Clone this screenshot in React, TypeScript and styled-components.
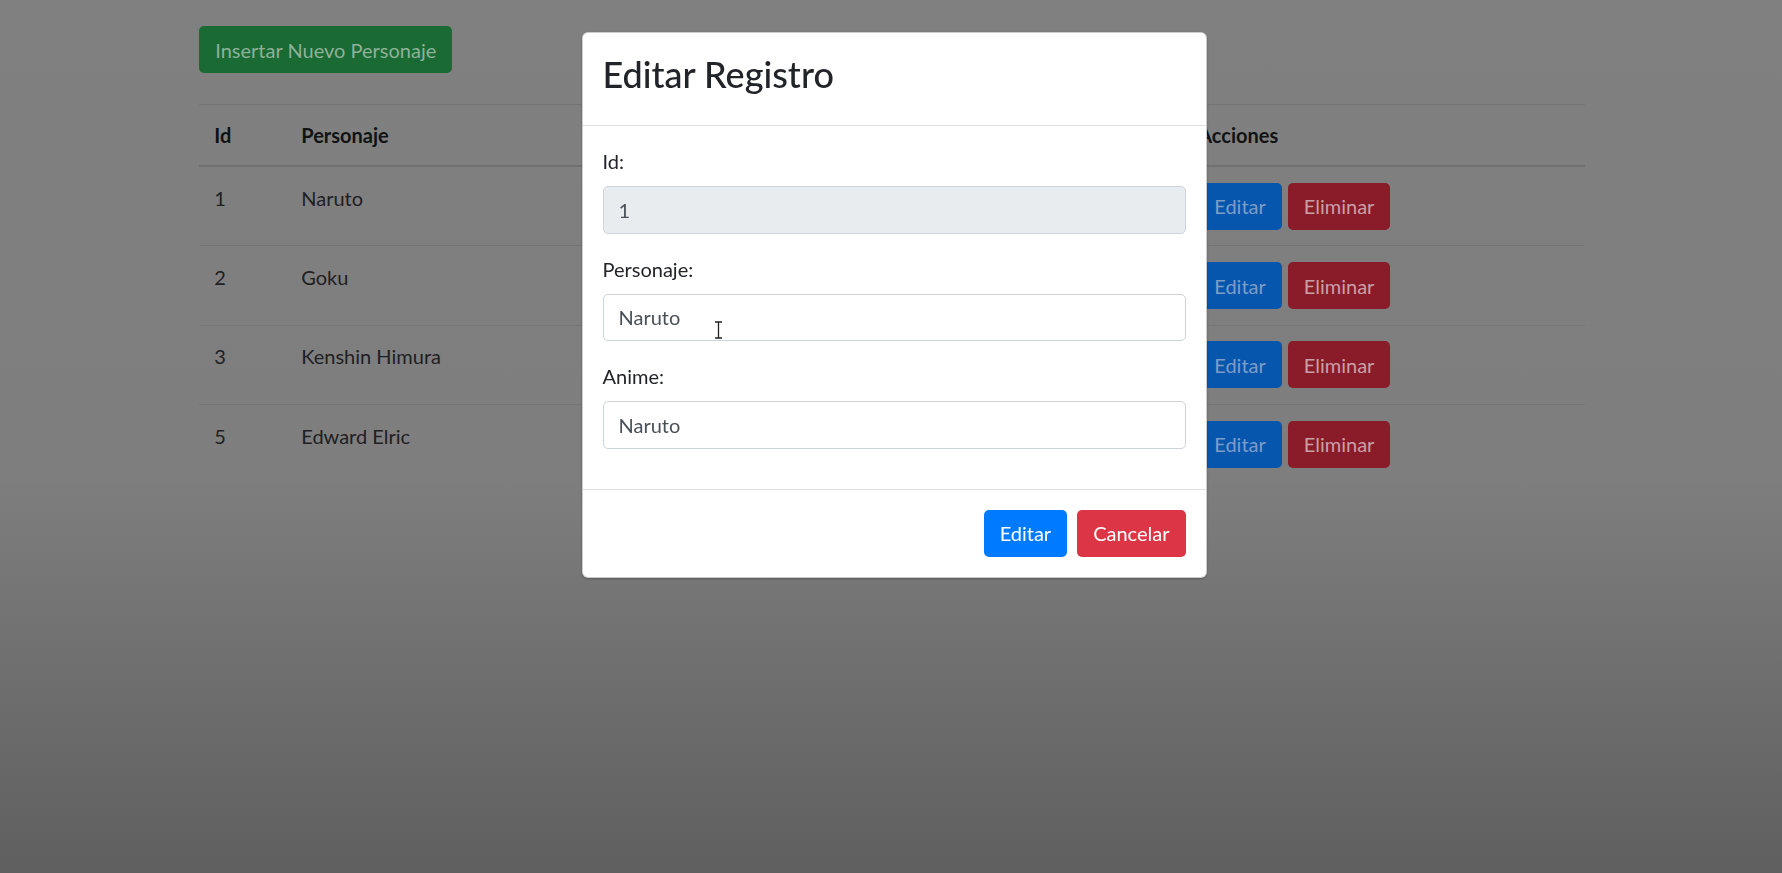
import React from "react";
import styled, { createGlobalStyle } from "styled-components";

const GlobalStyle = createGlobalStyle`
  html, body {
    margin: 0;
    padding: 0;
  }
  body {
    min-height: 873px;
    background: linear-gradient(to bottom, #808080 0%, #7e7e7e 55%, #5f5f5f 100%);
    font-family: Lato, "Open Sans", "Liberation Sans", sans-serif;
    font-size: 20px;
    line-height: 30px;
    overflow: hidden;
  }
  * { box-sizing: border-box; }
`;

const Page = styled.div`
  min-height: 873px;
`;

const Container = styled.div`
  max-width: 1425px;
  margin: 0 auto;
  padding: 26px 18.75px 0 20.75px;
`;

const DimButton = styled.button<{ $tone: "green" | "blue" | "red" }>`
  display: inline-block;
  font-family: inherit;
  font-size: 20px;
  line-height: 30px;
  padding: 7.5px 15px;
  border: 1.25px solid transparent;
  border-radius: 5px;
  background: ${(p) => (p.$tone === "green" ? "#196a33" : p.$tone === "blue" ? "#0756ad" : "#8a1b29")};
  color: ${(p) => (p.$tone === "green" ? "#8fb199" : p.$tone === "blue" ? "#7d9dc8" : "#c9a0a7")};
  cursor: default;
`;

const Table = styled.table`
  width: 100%;
  margin-top: 31px;
  border-collapse: collapse;
  table-layout: fixed;
  color: #16181b;
`;

const Th = styled.th<{ $w?: number }>`
  width: ${(p) => (p.$w ? `${p.$w}px` : "auto")};
  text-align: left;
  font-weight: 700;
  padding: 15px;
  border-top: 1.25px solid #747577;
  border-bottom: 2.5px solid #6f7072;
  color: #111214;
`;

const Td = styled.td`
  padding: 15.7px 15px;
  vertical-align: top;
  border-top: 1.25px solid #747577;
  color: #1e2023;
`;

const Actions = styled.div`
  display: flex;
  gap: 6px;
`;

const ModalLayer = styled.div`
  position: fixed;
  inset: 0;
  display: flex;
  justify-content: center;
  align-items: flex-start;
  padding: 32px 0 0 6px;
`;

const Modal = styled.div`
  width: 625px;
  background: #fff;
  border-radius: 6px;
  border: 1.25px solid rgba(0, 0, 0, 0.2);
  box-shadow: 0 1px 2px rgba(0, 0, 0, 0.25);
  color: #212529;
`;

const ModalHeader = styled.div`
  padding: 20px;
  border-bottom: 1.25px solid #dee2e6;
`;

const Title = styled.h3`
  margin: 0 0 10px;
  font-size: 36px;
  line-height: 42px;
  font-weight: 500;
  color: #212529;
`;

const ModalBody = styled.div`
  padding: 20px;
`;

const FormGroup = styled.div`
  margin-bottom: 20px;
`;

const Label = styled.label`
  display: block;
  margin-bottom: 10px;
  color: #212529;
`;

const Input = styled.input`
  display: block;
  width: 100%;
  height: 47.5px;
  padding: 7.5px 15px;
  font-family: inherit;
  font-size: 20px;
  line-height: 30px;
  color: #495057;
  background: ${(p) => (p.readOnly ? "#e9ecef" : "#fff")};
  border: 1.25px solid #ced4da;
  border-radius: 5px;
  outline: none;
`;

const Field = styled.div`
  position: relative;
`;

const Cursor = styled.svg`
  position: absolute;
  left: 111px;
  top: 27px;
  pointer-events: none;
`;

const ModalFooter = styled.div`
  display: flex;
  justify-content: flex-end;
  gap: 10px;
  padding: 20px;
  border-top: 1.25px solid #dee2e6;
`;

const Button = styled.button<{ $variant: "primary" | "danger" }>`
  font-family: inherit;
  font-size: 20px;
  line-height: 30px;
  padding: 7.5px 15px;
  border: 1.25px solid transparent;
  border-radius: 5px;
  color: #fff;
  background: ${(p) => (p.$variant === "primary" ? "#007bff" : "#dc3545")};
  cursor: default;
`;

const data = [
  { id: 1, personaje: "Naruto", anime: "Naruto" },
  { id: 2, personaje: "Goku", anime: "Dragon Ball" },
  { id: 3, personaje: "Kenshin Himura", anime: "Rurouni Kenshin" },
  { id: 5, personaje: "Edward Elric", anime: "Fullmetal Alchemist" },
];

export default function App() {
  return (
    <Page>
      <GlobalStyle />
      <Container>
        <DimButton $tone="green">Insertar Nuevo Personaje</DimButton>
        <Table>
          <thead>
            <tr>
              <Th $w={87}>Id</Th>
              <Th $w={448}>Personaje</Th>
              <Th $w={449}>Anime</Th>
              <Th>Acciones</Th>
            </tr>
          </thead>
          <tbody>
            {data.map((row) => (
              <tr key={row.id}>
                <Td>{row.id}</Td>
                <Td>{row.personaje}</Td>
                <Td>{row.anime}</Td>
                <Td>
                  <Actions>
                    <DimButton $tone="blue">Editar</DimButton>
                    <DimButton $tone="red">Eliminar</DimButton>
                  </Actions>
                </Td>
              </tr>
            ))}
          </tbody>
        </Table>
      </Container>

      <ModalLayer>
        <Modal>
          <ModalHeader>
            <Title>Editar Registro</Title>
          </ModalHeader>
          <ModalBody>
            <FormGroup>
              <Label>Id:</Label>
              <Input readOnly value="1" />
            </FormGroup>
            <FormGroup>
              <Label>Personaje:</Label>
              <Field>
                <Input defaultValue="Naruto" />
                <Cursor width="9" height="18" viewBox="0 0 9 18">
                  <path d="M1 1h7M1 17h7M4.5 1v16" stroke="#222" strokeWidth="1.3" fill="none" />
                </Cursor>
              </Field>
            </FormGroup>
            <FormGroup>
              <Label>Anime:</Label>
              <Input defaultValue="Naruto" />
            </FormGroup>
          </ModalBody>
          <ModalFooter>
            <Button $variant="primary">Editar</Button>
            <Button $variant="danger">Cancelar</Button>
          </ModalFooter>
        </Modal>
      </ModalLayer>
    </Page>
  );
}
